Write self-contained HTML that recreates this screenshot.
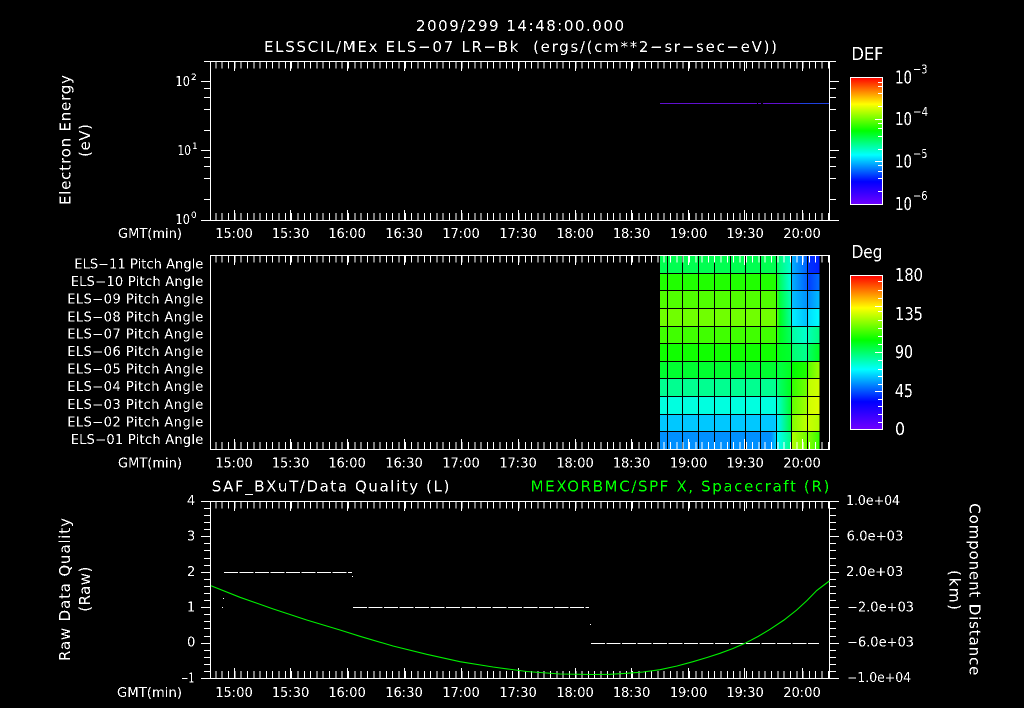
<!DOCTYPE html>
<html><head><meta charset="utf-8"><title>ELS plot</title>
<style>
html,body{margin:0;padding:0;background:#000;width:1024px;height:708px;overflow:hidden}
svg{display:block}
text{font-family:"DejaVu Sans","Liberation Sans",sans-serif;font-size:15px;fill:#fff}
.t{text-anchor:middle;font-size:13px}
.l{font-size:13px}
.big{font-size:18px}
.sup{font-size:9px}
.g{fill:#0f0}
</style></head><body>
<svg width="1024" height="708" viewBox="0 0 1024 708" xmlns="http://www.w3.org/2000/svg">
<defs>
<filter id="a" filterUnits="userSpaceOnUse" x="0" y="0" width="1024" height="708" color-interpolation-filters="sRGB">
<feComponentTransfer><feFuncA type="discrete" tableValues="0 0 1 1"/></feComponentTransfer>
</filter>
<linearGradient id="cb" x1="0" y1="0" x2="0" y2="1">
<stop offset="0" stop-color="#f00"/><stop offset=".21" stop-color="#ff0"/><stop offset=".42" stop-color="#0f0"/><stop offset=".61" stop-color="#0ff"/><stop offset=".82" stop-color="#00f"/><stop offset="1" stop-color="#7000ff"/>
</linearGradient>
<linearGradient id="r1" gradientUnits="userSpaceOnUse" x1="770" x2="820" y1="0" y2="0"><stop offset=".12" stop-color="#00ff50"/><stop offset=".2" stop-color="#00ff80"/><stop offset=".42" stop-color="#00ffd0"/><stop offset=".44" stop-color="#00b0ff"/><stop offset=".74" stop-color="#0060ff"/><stop offset=".78" stop-color="#0030ff"/><stop offset="1" stop-color="#0020ff"/></linearGradient>
<linearGradient id="r2" gradientUnits="userSpaceOnUse" x1="770" x2="820" y1="0" y2="0"><stop offset=".12" stop-color="#20ff00"/><stop offset=".2" stop-color="#00ff60"/><stop offset=".42" stop-color="#00ffe0"/><stop offset=".44" stop-color="#00b0ff"/><stop offset=".74" stop-color="#0060ff"/><stop offset=".78" stop-color="#0040ff"/><stop offset="1" stop-color="#0070ff"/></linearGradient>
<linearGradient id="r3" gradientUnits="userSpaceOnUse" x1="770" x2="820" y1="0" y2="0"><stop offset=".12" stop-color="#50ff00"/><stop offset=".2" stop-color="#00ff40"/><stop offset=".42" stop-color="#00ffb0"/><stop offset=".44" stop-color="#00c0ff"/><stop offset=".74" stop-color="#0090ff"/><stop offset=".78" stop-color="#0090ff"/><stop offset="1" stop-color="#00c0ff"/></linearGradient>
<linearGradient id="r4" gradientUnits="userSpaceOnUse" x1="770" x2="820" y1="0" y2="0"><stop offset=".12" stop-color="#70ff00"/><stop offset=".2" stop-color="#00ff20"/><stop offset=".42" stop-color="#00ffa0"/><stop offset=".44" stop-color="#00f0ff"/><stop offset=".74" stop-color="#00c0ff"/><stop offset=".78" stop-color="#00e0ff"/><stop offset="1" stop-color="#00ffff"/></linearGradient>
<linearGradient id="r5" gradientUnits="userSpaceOnUse" x1="770" x2="820" y1="0" y2="0"><stop offset=".12" stop-color="#40ff00"/><stop offset=".2" stop-color="#00ff20"/><stop offset=".42" stop-color="#00ff60"/><stop offset=".44" stop-color="#00ffa0"/><stop offset=".74" stop-color="#00ffd0"/><stop offset=".78" stop-color="#00ffb0"/><stop offset="1" stop-color="#00ff80"/></linearGradient>
<linearGradient id="r6" gradientUnits="userSpaceOnUse" x1="770" x2="820" y1="0" y2="0"><stop offset=".12" stop-color="#10ff00"/><stop offset=".2" stop-color="#00ff20"/><stop offset=".42" stop-color="#00ff30"/><stop offset=".44" stop-color="#00ff70"/><stop offset=".74" stop-color="#00ff90"/><stop offset=".78" stop-color="#00ff60"/><stop offset="1" stop-color="#00ff20"/></linearGradient>
<linearGradient id="r7" gradientUnits="userSpaceOnUse" x1="770" x2="820" y1="0" y2="0"><stop offset=".12" stop-color="#00ff30"/><stop offset=".2" stop-color="#00ff40"/><stop offset=".42" stop-color="#00ff20"/><stop offset=".44" stop-color="#00ff00"/><stop offset=".74" stop-color="#20ff00"/><stop offset=".78" stop-color="#60ff00"/><stop offset="1" stop-color="#a0ff00"/></linearGradient>
<linearGradient id="r8" gradientUnits="userSpaceOnUse" x1="770" x2="820" y1="0" y2="0"><stop offset=".12" stop-color="#00ff90"/><stop offset=".2" stop-color="#00ff60"/><stop offset=".42" stop-color="#00ff20"/><stop offset=".44" stop-color="#30ff00"/><stop offset=".74" stop-color="#70ff00"/><stop offset=".78" stop-color="#c0ff00"/><stop offset="1" stop-color="#d0ff00"/></linearGradient>
<linearGradient id="r9" gradientUnits="userSpaceOnUse" x1="770" x2="820" y1="0" y2="0"><stop offset=".12" stop-color="#00ffe0"/><stop offset=".2" stop-color="#00ffb0"/><stop offset=".42" stop-color="#00ff30"/><stop offset=".44" stop-color="#60ff00"/><stop offset=".74" stop-color="#a0ff00"/><stop offset=".78" stop-color="#d0ff00"/><stop offset="1" stop-color="#e0ff00"/></linearGradient>
<linearGradient id="r10" gradientUnits="userSpaceOnUse" x1="770" x2="820" y1="0" y2="0"><stop offset=".1" stop-color="#00c8ff"/><stop offset=".14" stop-color="#00f0ff"/><stop offset=".42" stop-color="#00ff40"/><stop offset=".44" stop-color="#80ff00"/><stop offset=".74" stop-color="#c0ff00"/><stop offset=".78" stop-color="#c8ff00"/><stop offset="1" stop-color="#b0ff00"/></linearGradient>
<linearGradient id="r11" gradientUnits="userSpaceOnUse" x1="770" x2="820" y1="0" y2="0"><stop offset=".02" stop-color="#0090ff"/><stop offset=".1" stop-color="#00c0ff"/><stop offset=".14" stop-color="#00ffff"/><stop offset=".42" stop-color="#00ff80"/><stop offset=".44" stop-color="#b0ff00"/><stop offset=".74" stop-color="#70ff00"/><stop offset=".78" stop-color="#80ff00"/><stop offset="1" stop-color="#30ff00"/></linearGradient>
</defs>
<rect width="1024" height="708" fill="#000"/>

<!-- heat map -->
<g shape-rendering="crispEdges">
<rect x="660" y="256" width="159.5" height="17" fill="url(#r1)"/>
<rect x="660" y="273" width="159.5" height="17.5" fill="url(#r2)"/>
<rect x="660" y="290" width="159.5" height="18.5" fill="url(#r3)"/>
<rect x="660" y="308" width="159.5" height="18.5" fill="url(#r4)"/>
<rect x="660" y="326" width="159.5" height="18" fill="url(#r5)"/>
<rect x="660" y="343.5" width="159.5" height="18" fill="url(#r6)"/>
<rect x="660" y="361" width="159.5" height="18" fill="url(#r7)"/>
<rect x="660" y="378" width="159.5" height="18.5" fill="url(#r8)"/>
<rect x="660" y="396" width="159.5" height="18.5" fill="url(#r9)"/>
<rect x="660" y="414" width="159.5" height="17.5" fill="url(#r10)"/>
<rect x="660" y="431" width="159.5" height="18" fill="url(#r11)"/>
<path fill="none" stroke="#000" stroke-width="1" d="M667.5 256V449M682.5 256V449M698.5 256V449M714.5 256V449M730.5 256V449M745.5 256V449M760.5 256V449M776.5 256V449M791.5 256V449M807.5 256V449M660 273.5H820M660 290.5H820M660 308.5H820M660 326.5H820M660 343.5H820M660 361.5H820M660 378.5H820M660 396.5H820M660 414.5H820M660 431.5H820"/>
</g>

<!-- axes -->
<g stroke="#fff" fill="none" stroke-width="1" shape-rendering="crispEdges">
<path d="M210.5 61V220M829.5 61V220M204 61.5H836M201 220.5H839"/>
<path d="M201 81.5H211M204 88.5H211M204 97.5H211M204 109.5H211M204 130.5H211M201 150.5H211M204 157.5H211M204 166.5H211M204 178.5H211M204 199.5H211"/>
<path d="M829 81.5H839M829 88.5H836M829 97.5H836M829 109.5H836M829 130.5H836M829 150.5H839M829 157.5H836M829 166.5H836M829 178.5H836M829 199.5H836"/>
<path stroke-width="7" stroke-dasharray="1 5.314" d="M215.4 65H829M215.4 216.5H829"/>
<path d="M234.5 61V71M290.5 61V71M347.5 61V71M404.5 61V71M461.5 61V71M518.5 61V71M575.5 61V71M631.5 61V71M688.5 61V71M744.5 61V71M802.5 61V71M234.5 210V220M290.5 210V220M347.5 210V220M404.5 210V220M461.5 210V220M518.5 210V220M575.5 210V220M631.5 210V220M688.5 210V220M744.5 210V220M802.5 210V220"/>
<path d="M210.5 255V450M829.5 255V450M210 255.5H830M210 449.5H830"/>
<path stroke-width="7" stroke-dasharray="1 5.314" d="M215.4 259H829M215.4 445.5H829"/>
<path d="M234.5 255V265M290.5 255V265M347.5 255V265M404.5 255V265M461.5 255V265M518.5 255V265M575.5 255V265M631.5 255V265M688.5 255V265M744.5 255V265M802.5 255V265M234.5 439V449M290.5 439V449M347.5 439V449M404.5 439V449M461.5 439V449M518.5 439V449M575.5 439V449M631.5 439V449M688.5 439V449M744.5 439V449M802.5 439V449"/>
<path d="M210.5 501V679M829.5 501V679M201 501.5H839M201 678.5H839"/>
<path d="M201 536.5H211M201 572.5H211M201 607.5H211M201 643.5H211M204 508.5H211M204 515.5H211M204 522.5H211M204 529.5H211M204 543.5H211M204 550.5H211M204 558.5H211M204 565.5H211M204 579.5H211M204 586.5H211M204 593.5H211M204 600.5H211M204 614.5H211M204 621.5H211M204 628.5H211M204 636.5H211M204 650.5H211M204 657.5H211M204 664.5H211M204 671.5H211"/>
<path d="M829 536.5H839M829 572.5H839M829 607.5H839M829 643.5H839M829 508.5H836M829 515.5H836M829 522.5H836M829 529.5H836M829 543.5H836M829 550.5H836M829 558.5H836M829 565.5H836M829 579.5H836M829 586.5H836M829 593.5H836M829 600.5H836M829 614.5H836M829 621.5H836M829 628.5H836M829 636.5H836M829 650.5H836M829 657.5H836M829 664.5H836M829 671.5H836"/>
<path stroke-width="7" stroke-dasharray="1 5.314" d="M215.4 505H829M215.4 674.5H829"/>
<path d="M234.5 501V511M290.5 501V511M347.5 501V511M404.5 501V511M461.5 501V511M518.5 501V511M575.5 501V511M631.5 501V511M688.5 501V511M744.5 501V511M802.5 501V511M234.5 668V678M290.5 668V678M347.5 668V678M404.5 668V678M461.5 668V678M518.5 668V678M575.5 668V678M631.5 668V678M688.5 668V678M744.5 668V678M802.5 668V678"/>
<path stroke-dasharray="14 1.5" d="M224 572.5H352M353 607.5H589M591 643.5H819"/>
<path d="M223 598.5h1M222 607.5h1M352 576.5h1M590 624.5h1"/>
<path stroke="#6010d0" d="M660 103.5H757M758 103.5H761M763 103.5H800"/>
<path stroke="#2040e0" d="M800 103.5H829"/>
</g>

<!-- curve -->
<polyline fill="none" stroke="#00f000" stroke-width="1.1" points="211,585.7 240,597.3 273.3,609 306.7,620 340,630 360,636.3 393,646 426.7,654.3 460,661.7 493,667 526.7,671.5 560,674 593,674.5 610,674.3 626.7,673.3 643,672 660,669.7 677,666 693,661.7 707,657.5 720,653.3 733,648.5 745,643.3 758,636.5 770,629.3 784,620 796.7,610 807,600.5 816.7,590.5 822,586.5 829.3,581"/>

<!-- colorbars -->
<g shape-rendering="crispEdges">
<rect x="850.5" y="77.5" width="32" height="127" fill="url(#cb)" stroke="#fff"/>
<path fill="none" stroke="#fff" d="M878 82.5h4M878 86.5h4M878 93.5h4M878 106.5h4M875 119.5h7M878 123.5h4M878 128.5h4M878 136.5h4M878 149.5h4M875 161.5h7M878 165.5h4M878 171.5h4M878 178.5h4M878 191.5h4"/>
<rect x="850.5" y="275.5" width="32" height="154" fill="url(#cb)" stroke="#fff"/>
<path fill="none" stroke="#fff" d="M878 281.5h4M878 290.5h4M878 298.5h4M875 306.5h7M878 311.5h4M878 320.5h4M878 328.5h4M878 336.5h4M878 344.5h4M875 352.5h7M878 360.5h4M878 369.5h4M878 376.5h4M878 384.5h4M875 391.5h7M878 399.5h4M878 406.5h4M878 414.5h4M878 422.5h4"/>
</g>

<!-- text -->
<g filter="url(#a)">
<text x="416" y="31" textLength="208" lengthAdjust="spacing">2009/299 14:48:00.000</text>
<text x="264" y="52" textLength="513" lengthAdjust="spacing" xml:space="preserve">ELSSCIL/MEx ELS−07 LR−Bk  (ergs/(cm**2−sr−sec−eV))</text>

<text class="big" x="851.5" y="60" textLength="32" lengthAdjust="spacingAndGlyphs">DEF</text>
<text class="big" x="851.5" y="258" textLength="31" lengthAdjust="spacingAndGlyphs">Deg</text>

<text class="l" x="175.5" y="86" textLength="14.5" lengthAdjust="spacingAndGlyphs">10</text><text class="sup" x="191" y="80">2</text>
<text class="l" x="177.5" y="155" textLength="13.5" lengthAdjust="spacingAndGlyphs">10</text><text class="sup" x="192" y="149">1</text>
<text class="l" x="175.5" y="224" textLength="14.5" lengthAdjust="spacingAndGlyphs">10</text><text class="sup" x="191" y="218">0</text>

<text transform="translate(70.7 205) rotate(-90)" textLength="130" lengthAdjust="spacing">Electron Energy</text>
<text transform="translate(90 157) rotate(-90)" textLength="33" lengthAdjust="spacing">(eV)</text>

<text class="l" x="118" y="238" textLength="64" lengthAdjust="spacingAndGlyphs">GMT(min)</text>
<text class="t" x="234" y="238">15:00</text><text class="t" x="290.5" y="238">15:30</text><text class="t" x="347" y="238">16:00</text><text class="t" x="404" y="238">16:30</text><text class="t" x="461" y="238">17:00</text><text class="t" x="518" y="238">17:30</text><text class="t" x="575" y="238">18:00</text><text class="t" x="631.5" y="238">18:30</text><text class="t" x="688.5" y="238">19:00</text><text class="t" x="745" y="238">19:30</text><text class="t" x="802" y="238">20:00</text>

<text class="l" x="118" y="467.5" textLength="64" lengthAdjust="spacingAndGlyphs">GMT(min)</text>
<text class="t" x="234" y="467.5">15:00</text><text class="t" x="290.5" y="467.5">15:30</text><text class="t" x="347" y="467.5">16:00</text><text class="t" x="404" y="467.5">16:30</text><text class="t" x="461" y="467.5">17:00</text><text class="t" x="518" y="467.5">17:30</text><text class="t" x="575" y="467.5">18:00</text><text class="t" x="631.5" y="467.5">18:30</text><text class="t" x="688.5" y="467.5">19:00</text><text class="t" x="745" y="467.5">19:30</text><text class="t" x="802" y="467.5">20:00</text>

<text class="l" x="117" y="697" textLength="65" lengthAdjust="spacingAndGlyphs">GMT(min)</text>
<text class="t" x="234" y="697">15:00</text><text class="t" x="290.5" y="697">15:30</text><text class="t" x="347" y="697">16:00</text><text class="t" x="404" y="697">16:30</text><text class="t" x="461" y="697">17:00</text><text class="t" x="518" y="697">17:30</text><text class="t" x="575" y="697">18:00</text><text class="t" x="631.5" y="697">18:30</text><text class="t" x="688.5" y="697">19:00</text><text class="t" x="745" y="697">19:30</text><text class="t" x="802" y="697">20:00</text>

<text class="l" x="74.3" y="268.5" textLength="129" lengthAdjust="spacing">ELS−11 Pitch Angle</text>
<text class="l" x="70.7" y="286" textLength="132.6" lengthAdjust="spacing">ELS−10 Pitch Angle</text>
<text class="l" x="67.3" y="303.7" textLength="136" lengthAdjust="spacing">ELS−09 Pitch Angle</text>
<text class="l" x="67.3" y="321.3" textLength="136" lengthAdjust="spacing">ELS−08 Pitch Angle</text>
<text class="l" x="67.3" y="338.5" textLength="136" lengthAdjust="spacing">ELS−07 Pitch Angle</text>
<text class="l" x="67.3" y="356" textLength="136" lengthAdjust="spacing">ELS−06 Pitch Angle</text>
<text class="l" x="67.3" y="373.5" textLength="136" lengthAdjust="spacing">ELS−05 Pitch Angle</text>
<text class="l" x="67.3" y="391" textLength="136" lengthAdjust="spacing">ELS−04 Pitch Angle</text>
<text class="l" x="67.3" y="409" textLength="136" lengthAdjust="spacing">ELS−03 Pitch Angle</text>
<text class="l" x="67.3" y="426.5" textLength="136" lengthAdjust="spacing">ELS−02 Pitch Angle</text>
<text class="l" x="70.7" y="444" textLength="132.6" lengthAdjust="spacing">ELS−01 Pitch Angle</text>

<text class="big" x="895" y="83.3" textLength="17" lengthAdjust="spacingAndGlyphs">10</text><text style="font-size:12px" x="913" y="73.3" textLength="14.5" lengthAdjust="spacingAndGlyphs">−3</text>
<text class="big" x="895" y="125" textLength="17" lengthAdjust="spacingAndGlyphs">10</text><text style="font-size:12px" x="913" y="116" textLength="15" lengthAdjust="spacingAndGlyphs">−4</text>
<text class="big" x="895" y="167.3" textLength="17" lengthAdjust="spacingAndGlyphs">10</text><text style="font-size:12px" x="913" y="158" textLength="14.5" lengthAdjust="spacingAndGlyphs">−5</text>
<text class="big" x="895" y="210" textLength="17" lengthAdjust="spacingAndGlyphs">10</text><text style="font-size:12px" x="913" y="200" textLength="14.5" lengthAdjust="spacingAndGlyphs">−6</text>
<text class="big" x="895" y="281" textLength="28" lengthAdjust="spacingAndGlyphs">180</text>
<text class="big" x="895" y="320" textLength="28" lengthAdjust="spacingAndGlyphs">135</text>
<text class="big" x="895" y="358" textLength="18" lengthAdjust="spacingAndGlyphs">90</text>
<text class="big" x="895" y="397" textLength="18" lengthAdjust="spacingAndGlyphs">45</text>
<text class="big" x="895" y="435" textLength="10" lengthAdjust="spacingAndGlyphs">0</text>

<text x="211.7" y="491.7" textLength="237.6" lengthAdjust="spacing">SAF_BXuT/Data Quality (L)</text>
<text class="g" x="530.7" y="491.7" textLength="298.6" lengthAdjust="spacing">MEXORBMC/SPF X, Spacecraft (R)</text>

<text class="l" x="187" y="505">4</text><text class="l" x="187" y="540.7">3</text><text class="l" x="187" y="576">2</text><text class="l" x="187" y="611.7">1</text><text class="l" x="187" y="646.7">0</text><text class="l" x="181" y="682.3" textLength="13.5" lengthAdjust="spacingAndGlyphs">−1</text>

<text transform="translate(70 661) rotate(-90)" textLength="143" lengthAdjust="spacing">Raw Data Quality</text>
<text transform="translate(90 611.7) rotate(-90)" textLength="45" lengthAdjust="spacing">(Raw)</text>

<text class="l" x="846" y="505" textLength="54" lengthAdjust="spacingAndGlyphs">1.0e+04</text>
<text class="l" x="846.7" y="540.7" textLength="56.6" lengthAdjust="spacingAndGlyphs">6.0e+03</text>
<text class="l" x="846" y="576" textLength="57.3" lengthAdjust="spacingAndGlyphs">2.0e+03</text>
<text class="l" x="847" y="611.7" textLength="67" lengthAdjust="spacingAndGlyphs">−2.0e+03</text>
<text class="l" x="847" y="646.7" textLength="67" lengthAdjust="spacingAndGlyphs">−6.0e+03</text>
<text class="l" x="847" y="682" textLength="64" lengthAdjust="spacingAndGlyphs">−1.0e+04</text>

<text transform="translate(969.3 503.3) rotate(90)" textLength="172" lengthAdjust="spacing">Component Distance</text>
<text transform="translate(949.5 570) rotate(90)" textLength="40" lengthAdjust="spacing">(km)</text>
</g>
</svg>
</body></html>
